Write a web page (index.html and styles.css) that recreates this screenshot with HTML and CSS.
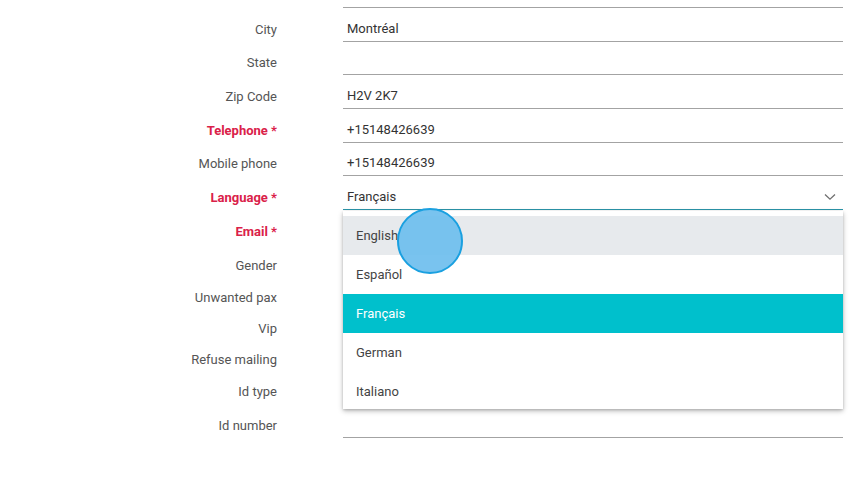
FILE: index.html
```html
<!DOCTYPE html>
<html>
<head>
<meta charset="utf-8">
<link rel="stylesheet" href="styles.css">
</head>
<body>
<div class="form">
  <div class="row field-row"><label class="lbl">Address</label><div class="field"><span class="val"></span></div></div>
  <div class="row field-row"><label class="lbl">City</label><div class="field"><span class="val">Montréal</span></div></div>
  <div class="row field-row"><label class="lbl">State</label><div class="field"><span class="val"></span></div></div>
  <div class="row field-row"><label class="lbl">Zip Code</label><div class="field"><span class="val">H2V 2K7</span></div></div>
  <div class="row field-row"><label class="lbl req">Telephone *</label><div class="field"><span class="val">+15148426639</span></div></div>
  <div class="row field-row"><label class="lbl">Mobile phone</label><div class="field"><span class="val">+15148426639</span></div></div>
  <div class="row field-row"><label class="lbl req">Language *</label>
    <div class="field select focused"><span class="val">Français</span>
      <svg class="chev" width="12" height="8" viewBox="0 0 12 8"><path d="M1 1.5 L6 6.2 L11 1.5" fill="none" stroke="#6f6f6f" stroke-width="1.3"/></svg>
      <div class="menu">
        <div class="opt hover">English</div>
        <div class="opt">Español</div>
        <div class="opt selected">Français</div>
        <div class="opt">German</div>
        <div class="opt">Italiano</div>
      </div>
    </div>
  </div>
  <div class="row field-row"><label class="lbl req">Email *</label><div class="field"><span class="val"></span></div></div>
  <div class="row field-row"><label class="lbl">Gender</label><div class="field"><span class="val"></span></div></div>
  <div class="row check-row"><label class="lbl">Unwanted pax</label><div class="check"></div></div>
  <div class="row check-row"><label class="lbl">Vip</label><div class="check"></div></div>
  <div class="row check-row"><label class="lbl">Refuse mailing</label><div class="check"></div></div>
  <div class="row field-row"><label class="lbl">Id type</label><div class="field blank"><span class="val"></span></div></div>
  <div class="row field-row"><label class="lbl">Id number</label><div class="field"><span class="val"></span></div></div>
</div>
<div class="cursor"></div>
</body>
</html>
```
FILE: styles.css
```css
html, body {
  margin: 0;
  padding: 0;
  background: #ffffff;
  font-family: Roboto, "Liberation Sans", Arial, sans-serif;
  overflow: hidden;
}
.form {
  margin-top: -25.7px;
  width: 843px;
  display: flex;
  flex-direction: column;
}
.row {
  display: grid;
  grid-template-columns: 277px 500px;
  column-gap: 66px;
}
.field-row { height: 33.7px; }
.check-row { height: 31px; }
.lbl {
  text-align: right;
  font-size: 13px;
  line-height: 16px;
  color: #555555;
  align-self: end;
  padding-bottom: 4px;
  white-space: nowrap;
}
.check-row .lbl {
  align-self: start;
  padding-top: 12px;
  padding-bottom: 0;
}
.lbl.req {
  color: #da2149;
  font-weight: 700;
}
.field {
  position: relative;
  box-sizing: border-box;
  height: 100%;
  border-bottom: 1px solid #a3a3a3;
  display: flex;
  align-items: flex-end;
  padding: 0 4px 4px;
}
.field.focused { border-bottom-color: #2b94a8; }
.val {
  font-size: 13px;
  line-height: 16px;
  color: #333333;
  min-height: 16px;
}
.chev {
  position: absolute;
  right: 7px;
  bottom: 8px;
}
.menu {
  position: absolute;
  top: calc(100% + 2px);
  left: 0;
  right: 0;
  height: 198px;
  overflow: hidden;
  background: #ffffff;
  padding-top: 5px;
  box-sizing: border-box;
  box-shadow: 0 2px 5px rgba(0,0,0,0.28), 0 1px 2px rgba(0,0,0,0.12);
  z-index: 5;
}
.opt {
  height: 39px;
  display: flex;
  align-items: center;
  padding-left: 13px;
  font-size: 13px;
  color: #444444;
}
.opt.hover { background: #e7eaed; }
.opt.selected { background: #00c0cc; color: #ffffff; }
.cursor {
  position: absolute;
  left: 397px;
  top: 208px;
  width: 62px;
  height: 62px;
  border-radius: 50%;
  border: 2px solid #1aa0e0;
  background: rgba(110, 190, 238, 0.92);
  z-index: 10;
}
```
